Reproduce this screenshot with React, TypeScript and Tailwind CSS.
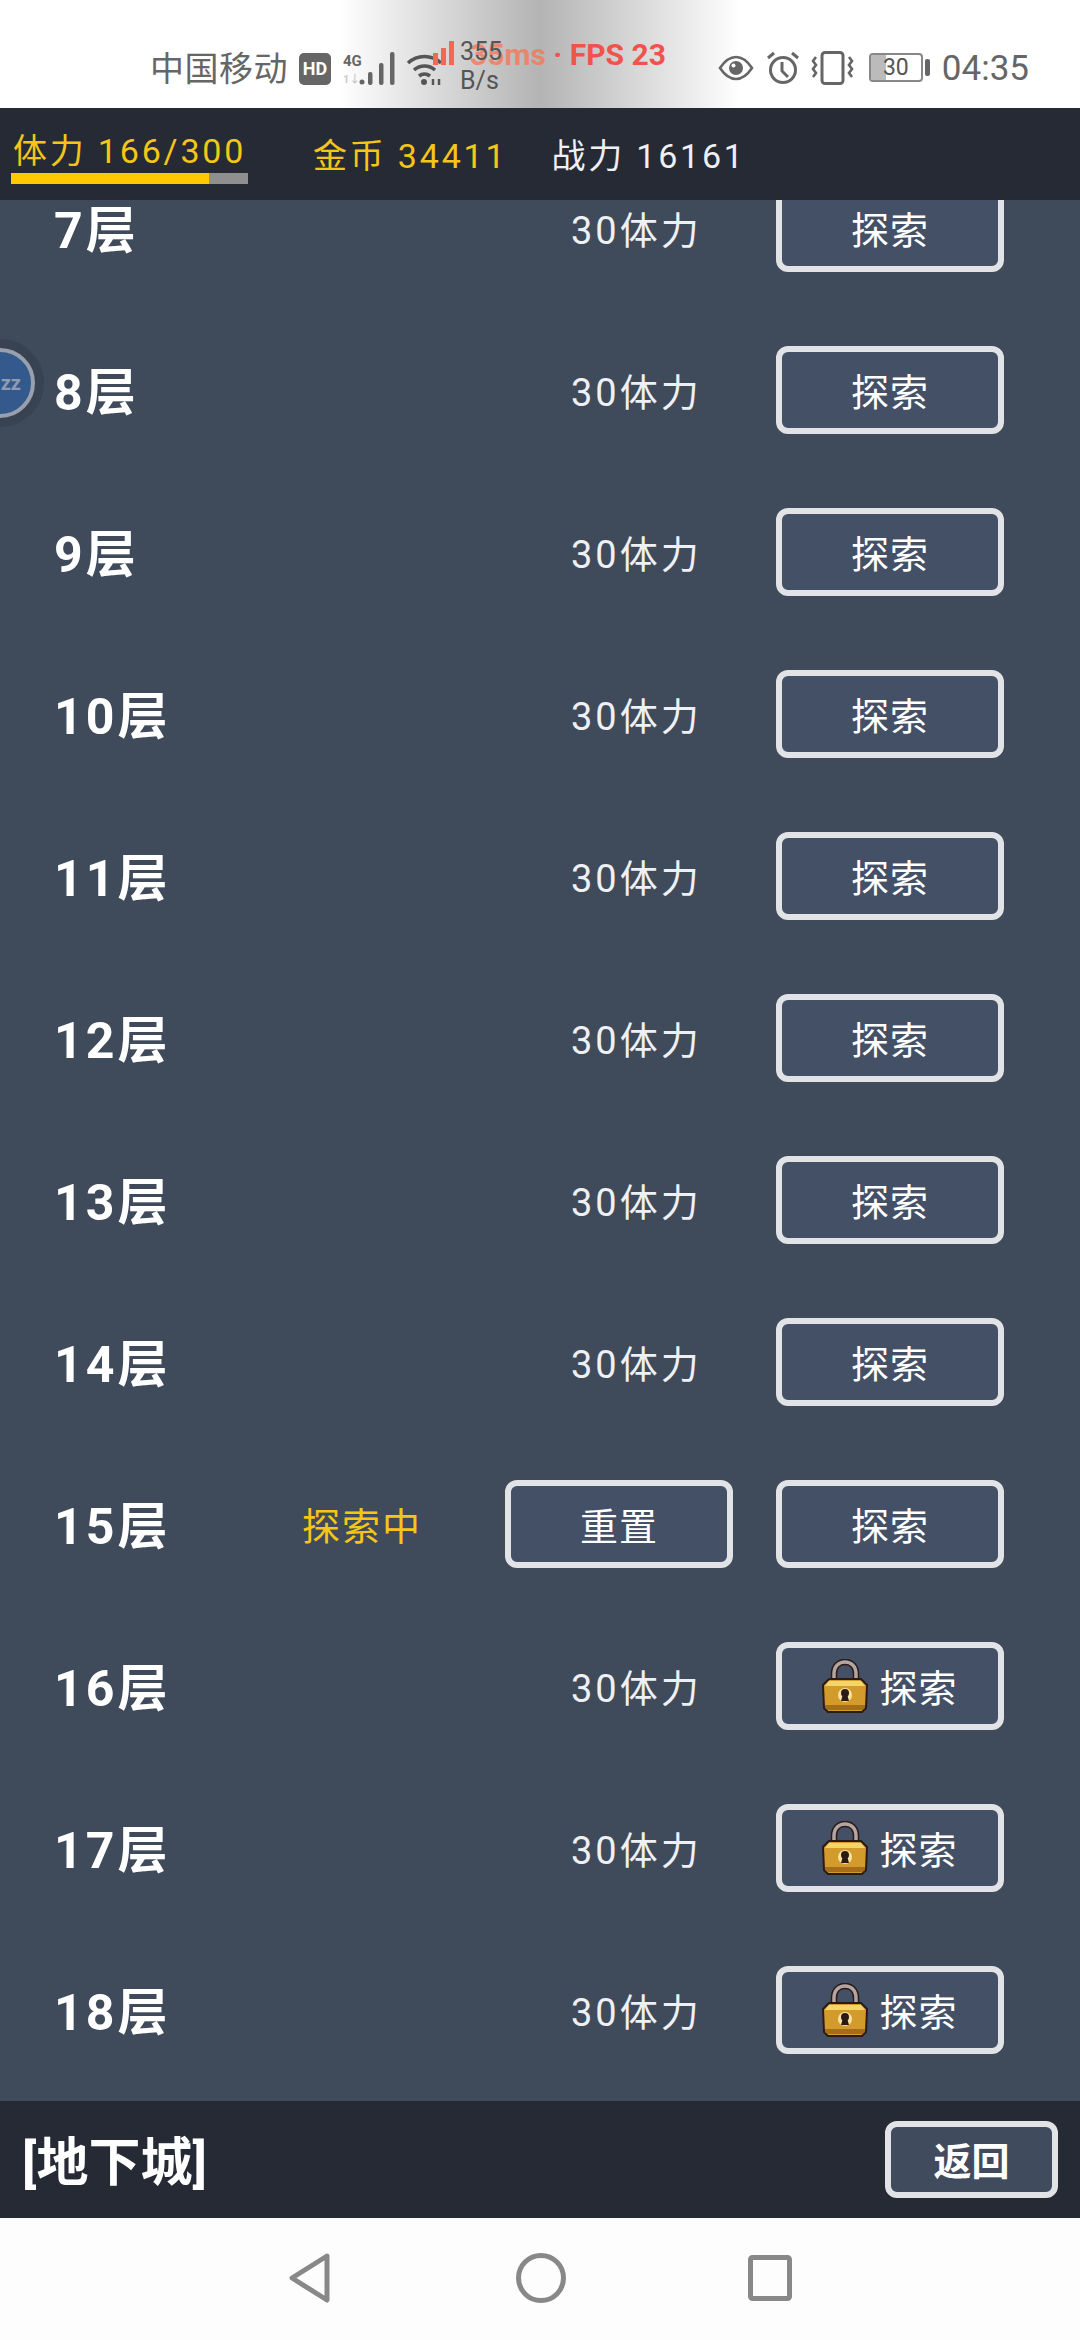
import React from "react"

const floors = [7, 8, 9, 10, 11, 12, 13, 14, 15, 16, 17, 18]

function LockIcon() {
  return (
    <svg width="46" height="54" viewBox="0 0 46 54" className="shrink-0">
      <path d="M12 26V15C12 7 17 3 23 3s11 4 11 12v11" fill="none" stroke="#2b1a16" strokeWidth="6.5" />
      <path d="M12 26V15C12 7 17 3 23 3s11 4 11 12v11" fill="none" stroke="#b3a5a1" strokeWidth="3.5" />
      <path d="M7 20h32l6 6-1 23-4 4H6l-4-4-1-23z" fill="#d39a2c" stroke="#2b1a16" strokeWidth="2" />
      <path d="M7 22h32l4 5H3z" fill="#f5d468" />
      <path d="M3 46h40v3l-3 2H6l-3-2z" fill="#a46c1b" />
      <circle cx="23" cy="36" r="7" fill="#f7e3a1" />
      <circle cx="23" cy="34" r="4" fill="#2b1a16" />
      <path d="M21 35h4l2 7h-8z" fill="#2b1a16" />
    </svg>
  )
}

function ActionButton({ label, locked }: { label: string; locked?: boolean }) {
  return (
    <button className="w-[228px] h-[88px] mb-[4px] flex items-center justify-center gap-[11px] rounded-[12px] border-[6px] border-[#e2e3e6] bg-[#435066] text-[38px] tracking-[1px] text-white">
      {locked && <LockIcon />}
      <span className="pt-[6px]">{label}</span>
    </button>
  )
}

function FloorRow({ floor }: { floor: number }) {
  const exploring = floor === 15
  return (
    <div className="h-[162px] shrink-0 flex items-center pl-[54px]">
      <div className={(exploring ? "w-[248px]" : "w-[517px]") + " pt-[2px] text-[50px] font-bold tracking-[3px] text-white"}>
        {floor}层
      </div>
      {exploring ? (
        <>
          <div className="w-[203px] pt-[3px] text-[38px] tracking-[2px] text-[#f5c518]">探索中</div>
          <ActionButton label="重置" />
          <div className="w-[43px]" />
        </>
      ) : (
        <div className="w-[205px] pt-[3px] text-[38px] tracking-[3px] text-[#eef0f3]">30体力</div>
      )}
      <ActionButton label="探索" locked={floor >= 16} />
    </div>
  )
}

function StatusBar() {
  return (
    <div className="relative h-[108px] shrink-0 bg-white overflow-hidden">
      <div className="absolute left-[340px] top-0 w-[400px] h-full bg-gradient-to-r from-white via-[#b4b4b4] to-white" />
      <div className="relative flex items-center h-full pl-[150px] pt-[30px] text-[#666]">
        <span className="text-[34px] tracking-[0.5px] whitespace-nowrap">中国移动</span>
        <svg width="32" height="32" viewBox="0 0 32 32" className="ml-[11px]">
          <rect width="32" height="32" rx="5" fill="#666" />
          <text x="16" y="22" textAnchor="middle" fontSize="18" fontWeight="700" fill="#fff">HD</text>
        </svg>
        <svg width="54" height="34" viewBox="0 0 54 34" className="ml-[12px]">
          <text x="0" y="14" fontSize="15" fontWeight="700" fill="#666">4G</text>
          <text x="0" y="31" fontSize="11" fontWeight="700" fill="#ccc">1↓</text>
          <circle cx="19" cy="30" r="2.5" fill="#666" />
          <rect x="25" y="20" width="4.5" height="13" rx="2" fill="#666" />
          <rect x="36" y="11" width="4.5" height="22" rx="2" fill="#666" />
          <rect x="47" y="0" width="4.5" height="33" rx="2" fill="#666" />
        </svg>
        <svg width="40" height="34" viewBox="0 0 40 34" className="ml-[9px]">
          <path d="M2 11a24 24 0 0 1 33 0M8 18a16 16 0 0 1 21 0M13 24a9 9 0 0 1 11 0" fill="none" stroke="#555" strokeWidth="3.5" />
          <circle cx="18" cy="30" r="3" fill="#555" />
          <path d="M27 27v6M33 27v6" stroke="#555" strokeWidth="2.5" />
        </svg>
      </div>
      <div className="absolute left-[433px] top-[41px] flex items-end gap-[3px]">
        <span className="w-[5px] h-[12px] bg-[#f26a4b]" />
        <span className="w-[5px] h-[17px] bg-[#f26a4b]" />
        <span className="w-[5px] h-[24px] bg-[#f26a4b]" />
      </div>
      <div className="absolute left-[470px] top-[37px] text-[30px] leading-[36px] font-bold text-[#f0524d]">
        <span className="text-[#f5795a] opacity-80">35ms</span> · FPS 23
      </div>
      <div className="absolute left-[460px] top-[36px] text-[25px] leading-[32px] text-[#555]">355</div>
      <div className="absolute left-[460px] top-[66px] text-[25px] leading-[30px] text-[#555]">B/s</div>
      <div className="absolute right-[51px] top-[49px] flex items-center">
        <svg width="36" height="28" viewBox="0 0 36 28">
          <path d="M2 14C8 5 13 3 18 3s10 2 16 11c-6 9-11 11-16 11S8 23 2 14z" fill="none" stroke="#666" strokeWidth="2.6" />
          <circle cx="18" cy="14" r="7" fill="#666" />
          <circle cx="15.5" cy="11.5" r="2" fill="#fff" />
        </svg>
        <svg width="34" height="34" viewBox="0 0 34 34" className="ml-[12px]">
          <circle cx="17" cy="19" r="12.5" fill="none" stroke="#666" strokeWidth="3" />
          <path d="M16 11v9l6 6M2 7l6-5M32 7l-6-5" fill="none" stroke="#666" strokeWidth="3" />
        </svg>
        <svg width="43" height="34" viewBox="0 0 43 34" className="ml-[11px]">
          <rect x="11" y="1.5" width="21" height="31" rx="3" fill="none" stroke="#666" strokeWidth="3" />
          <path d="M5 6l-3 4 3 4-3 4 3 4-3 4M38 6l3 4-3 4 3 4-3 4 3 4" fill="none" stroke="#666" strokeWidth="2.6" />
        </svg>
        <div className="relative ml-[15px] w-[54px] h-[29px] rounded-[4px] border-2 border-[#888] overflow-hidden">
          <div className="absolute left-0 top-0 h-full w-[15px] bg-[#bbb]" />
          <div className="absolute inset-0 flex items-center justify-center text-[23px] leading-none text-[#555]">30</div>
        </div>
        <div className="ml-[2px] w-[5px] h-[17px] rounded-[2px] bg-[#666]" />
        <div className="ml-[12px] pt-[2px] text-[35px] leading-none text-[#666]">04:35</div>
      </div>
    </div>
  )
}

export default function App() {
  return (
    <div className="w-[1080px] h-[2340px] flex flex-col overflow-hidden bg-[#3f4a5a] font-['Roboto','Noto_Sans_CJK_SC',sans-serif]">
      <StatusBar />

      {/* top stats */}
      <div className="h-[92px] shrink-0 flex items-center bg-[#262a35] pl-[11px] text-[34px] tracking-[2.8px]">
        <div className="w-[237px] pt-[6px] text-[#f5c518]">
          <div className="pl-[2px] pt-[1px] h-[40px] leading-[40px] whitespace-nowrap">体力 166/300</div>
          <div className="h-[11px] mt-[3px] bg-[#8f8f8f]">
            <div className="h-full w-[198px] bg-[#ffc800]" />
          </div>
        </div>
        <div className="ml-[65px] pt-[5px] text-[#f5c518]">金币 34411</div>
        <div className="ml-[44px] pt-[5px] text-[#eef0f3]">战力 16161</div>
      </div>

      {/* floor list */}
      <div className="relative flex-1 overflow-hidden">
        <div className="flex flex-col mt-[-51px]">
          {floors.map((floor) => (
            <FloorRow key={floor} floor={floor} />
          ))}
        </div>
        <div className="absolute left-[-44px] top-[139px] w-[88px] h-[88px] rounded-full bg-[#384250] flex items-center justify-center">
          <div className="w-[70px] h-[70px] rounded-full border-[4px] border-[#98a0ae] bg-[#34598c] flex items-center justify-end pr-[20px] text-[20px] font-bold text-[#8f9bb0]">
            <span className="translate-x-[10px]">zz</span>
          </div>
        </div>
      </div>

      {/* footer */}
      <div className="h-[117px] shrink-0 flex items-center justify-between bg-[#262a35] pl-[22px] pr-[22px]">
        <div className="pt-[8px] text-[52px] font-bold text-white">[地下城]</div>
        <button className="w-[173px] h-[77px] pt-[5px] rounded-[12px] border-[6px] border-[#e2e3e6] bg-[#414b5e] text-[38px] font-bold text-white">
          返回
        </button>
      </div>

      {/* android nav */}
      <div className="h-[122px] shrink-0 bg-[#fdfdfd] flex items-center justify-center">
        <div className="flex items-center mt-[-3px]">
          <svg width="44" height="50" viewBox="0 0 44 50">
            <path d="M39 3L4 25l35 22z" fill="none" stroke="#888" strokeWidth="5" strokeLinejoin="round" />
          </svg>
          <svg width="50" height="50" viewBox="0 0 50 50" className="ml-[184px]">
            <circle cx="25" cy="25" r="22.5" fill="none" stroke="#888" strokeWidth="5" />
          </svg>
          <svg width="44" height="46" viewBox="0 0 44 46" className="ml-[182px]">
            <rect x="2.5" y="2.5" width="39" height="41" rx="2" fill="none" stroke="#888" strokeWidth="5" />
          </svg>
        </div>
      </div>
    </div>
  )
}
